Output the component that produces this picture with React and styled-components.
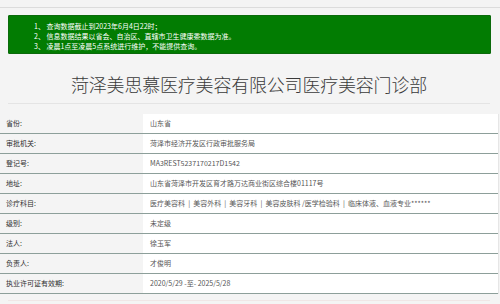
import React from "react";
import styled, { createGlobalStyle } from "styled-components";

const Global = createGlobalStyle`
  html, body { margin: 0; padding: 0; background: #f4f4f4; }
  body { font-family: "Noto Sans CJK SC", "Noto Sans", sans-serif; }
`;

const Page = styled.div`
  width: 500px;
  height: 304px;
  overflow: hidden;
  background: #f4f4f4;
`;

const TopBar = styled.div`
  height: 7px;
  border-bottom: 1px solid #dcdcdc;
`;

const Notice = styled.ol`
  list-style: none;
  margin: 7px 9px 0 8px;
  padding: 5px 0 4px 25px;
  height: 39px;
  box-sizing: border-box;
  background: #027c02;
  border: 1px solid #0b6a0b;
  border-radius: 1px;
  color: #ffffff;
  font-size: 7px;
  line-height: 10px;
`;

const NoticeItem = styled.li`
  white-space: nowrap;
`;

const Title = styled.h1`
  margin: 0 10px 0 8px;
  padding: 18px 0 7px;
  border-bottom: 1px solid #e4e4e4;
  text-align: center;
  font-size: 18px;
  line-height: 24px;
  font-weight: 300;
  color: #3a3a3a;
  letter-spacing: -0.2px;
`;

const Table = styled.div`
  margin-top: 10px;
  width: 498px;
  border-right: 1px solid #e6e6e6;
`;

const Row = styled.div`
  display: grid;
  grid-template-columns: 143px 1fr;
  height: 20px;
  box-sizing: border-box;
  border-bottom: 1px solid #8d9f9a;
  font-size: 7px;
  line-height: 19px;
`;

const Label = styled.div`
  padding-left: 6px;
  color: #2e2e2e;
  background: #f4f4f4;
  white-space: nowrap;
`;

const Value = styled.div`
  padding-left: 7px;
  color: #555555;
  background: #ffffff;
  white-space: nowrap;
`;

const Footer = styled.div`
  margin: 6px 10px 0 8px;
  border-top: 1px solid #f0e6e6;
`;

const notices = [
  "1、 查询数据截止到2023年6月4日22时；",
  "2、 信息数据结果以省会、自治区、直辖市卫生健康委数据为准。",
  "3、 凌晨1点至凌晨5点系统进行维护，不能提供查询。",
];

const rows = [
  ["省份:", "山东省"],
  ["审批机关:", "菏泽市经济开发区行政审批服务局"],
  ["登记号:", "MA3REST5237170217D1542"],
  ["地址:", "山东省菏泽市开发区育才路万达商业街区综合楼01117号"],
  [
    "诊疗科目:",
    "医疗美容科 \u00a0|\u00a0 美容外科 \u00a0|\u00a0 美容牙科 \u00a0|\u00a0 美容皮肤科 /医学检验科 \u00a0|\u00a0 临床体液、血液专业******",
  ],
  ["级别:", "未定级"],
  ["法人:", "徐玉军"],
  ["负责人:", "才俊明"],
  ["执业许可证有效期:", "2020/5/29 -至- 2025/5/28"],
];

export default function App() {
  return (
    <Page>
      <Global />
      <TopBar />
      <Notice>
        {notices.map((n) => (
          <NoticeItem key={n}>{n}</NoticeItem>
        ))}
      </Notice>
      <Title>菏泽美思慕医疗美容有限公司医疗美容门诊部</Title>
      <Table>
        {rows.map(([l, v]) => (
          <Row key={l}>
            <Label>{l}</Label>
            <Value>{v}</Value>
          </Row>
        ))}
      </Table>
      <Footer />
    </Page>
  );
}
